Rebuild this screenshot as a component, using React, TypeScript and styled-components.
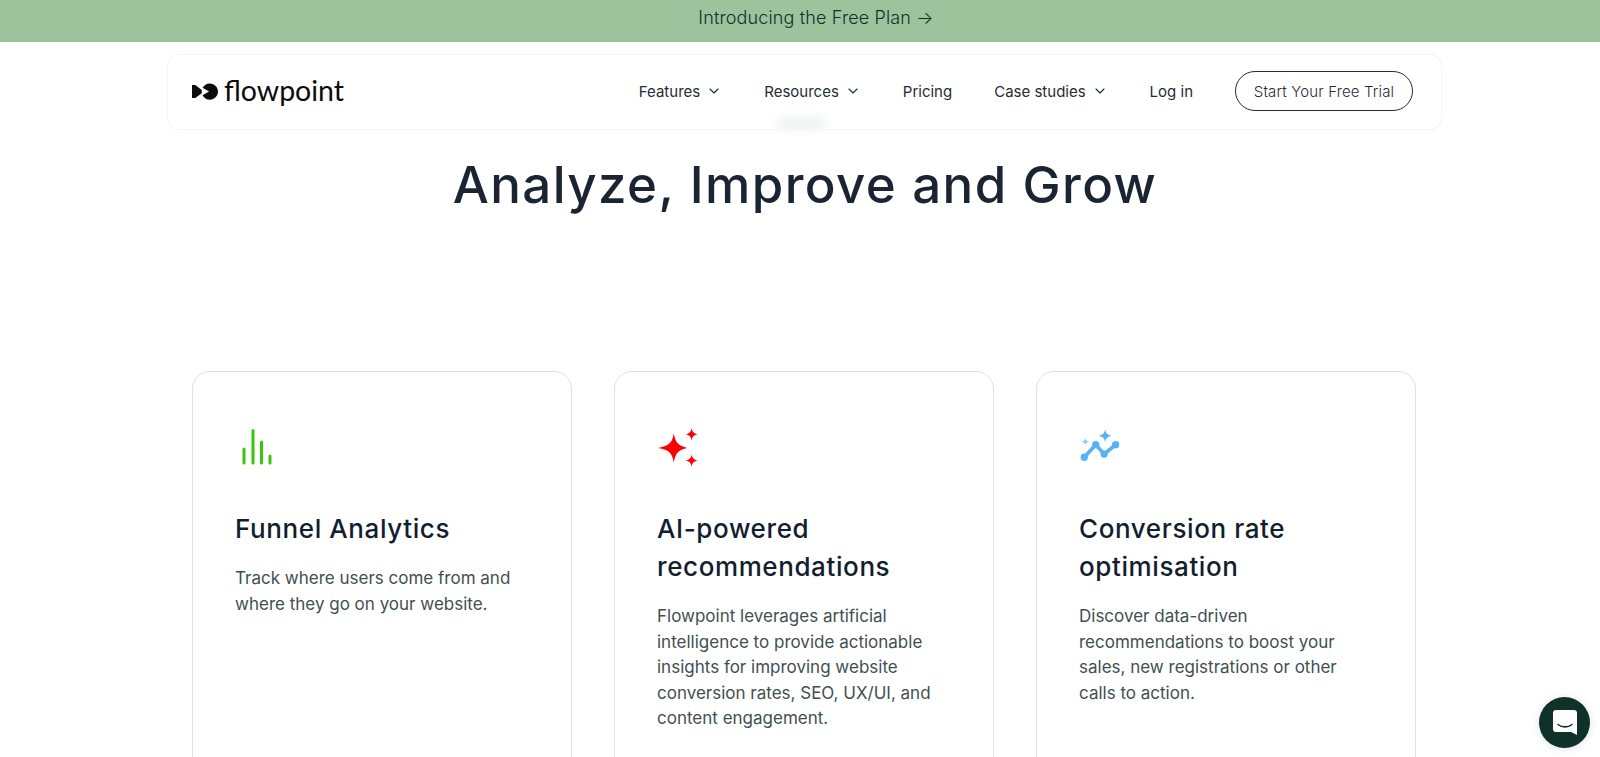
import React from "react";
import styled, { createGlobalStyle } from "styled-components";
import { ChevronDown } from "lucide-react";

const Global = createGlobalStyle`
  html, body { margin: 0; padding: 0; height: 757px; overflow: hidden; background: #fff; }
  * { box-sizing: border-box; }
`;
const Page = styled.div`
  width: 1600px; height: 757px; overflow: hidden; background: #fff; font-family: Inter, sans-serif;
`;
const Banner = styled.a`
  display: flex; align-items: center; justify-content: center; height: 42px; padding: 0 0 7px 32px;
  background: #9dc39c; color: #12302a; font: 300 18px Inter, sans-serif; letter-spacing: 0.14px;
`;
const NavWrap = styled.div`
  padding: 12px 158px 0 167px; position: relative;
`;
const Nav = styled.nav`
  display: flex; align-items: center; justify-content: space-between; height: 76px;
  padding: 0 28px 2px 24px; border: 1px solid #f3f4f4; border-radius: 12px; background: #fff;
`;
const Brand = styled.div`
  display: flex; align-items: center; gap: 6px; color: #0c0c0c;
`;
const BrandName = styled.span`
  font: 400 28.5px Lato, sans-serif; line-height: 1; position: relative; top: -1px;
`;
const Menu = styled.div`
  display: flex; align-items: center; gap: 42px;
`;
const MenuItem = styled.a`
  display: flex; align-items: center; gap: 6px; color: #1f2d33; font: 400 15px Inter, sans-serif; white-space: nowrap;
`;
const Cta = styled.a`
  display: flex; align-items: center; justify-content: center; width: 178px; height: 40px;
  border: 1px solid #1f2f33; border-radius: 20px; color: #1f2d33; font: 300 15px Inter, sans-serif;
  letter-spacing: 0.15px; white-space: nowrap;
`;
const Smudge = styled.div`
  position: absolute; left: 776px; top: 74px; width: 50px; height: 14px; border-radius: 8px;
  background: #f2f3f3; filter: blur(4px);
`;
const Heading = styled.h1`
  margin: 22px 0 0; padding-left: 10px; text-align: center; color: #1a2433;
  font: 450 51px/66px Inter, sans-serif; letter-spacing: 1.4px;
`;
const Cards = styled.div`
  display: grid; grid-template-columns: repeat(3, 379.5px); gap: 42.5px; margin: 153px 0 0 192px;
`;
const Card = styled.article`
  height: 600px; padding: 56px 42px 0; border: 1px solid #dde3e3; border-radius: 18px; background: #fff;
`;
const IconBox = styled.div<{ $inset?: number }>`
  height: 44px; margin-bottom: 38px; padding-left: ${(p) => p.$inset ?? 0}px; display: flex; align-items: flex-start;
`;
const CardTitle = styled.h3`
  margin: 0 0 18px; color: #121e2e; font: 450 26px/38px Inter, sans-serif; letter-spacing: 0.6px;
`;
const CardText = styled.p`
  margin: 0; color: #3f5050; font: 400 17px/25.5px Inter, sans-serif;
`;
const Chat = styled.div`
  position: fixed; left: 1539px; top: 697px; width: 51px; height: 51px; border-radius: 50%;
  background: #10302a; display: flex; align-items: center; justify-content: center;
  box-shadow: 0 1px 8px rgba(0,0,0,.12);
`;

const Logo = () => (
  <svg width="26" height="17" viewBox="0 0 32 20">
    <path d="M0 2h4l8 6v4l-8 6H0z" fill="#0c0c0c" />
    <path d="M22 0c5.500 0 10 4.500 10 10s-4.500 10-10 10c-4 0-7.500-2.300-9-5.500l8-4.500-8-4.500C14.500 2.300 18 0 22 0z" fill="#0c0c0c" />
  </svg>
);
const BarsIcon = () => (
  <svg width="32" height="37" viewBox="0 0 32 37" stroke="#3cc40c" strokeWidth="3" strokeLinecap="round">
    <path d="M2 21v14M11 2.500V35M19.500 14v21M28 28v7" />
  </svg>
);
const SparkIcon = () => (
  <svg width="42" height="40" viewBox="0 0 40 38" fill="#ff0000">
    <path d="M16 5C17.500 14 20 17 29 19C20 21 17.500 24 16 33C14.500 24 12 21 1 19C12 17 14.500 14 16 5Z" />
    <path d="M33 0C33.600 3.800 35 5.200 39 6C35 6.800 33.600 8.200 33 12C32.400 8.200 31 6.800 27 6C31 5.200 32.400 3.800 33 0Z" />
    <path d="M33 25C33.600 28.800 35 30.200 39 31C35 31.800 33.600 33.200 33 37C32.400 33.200 31 31.800 27 31C31 30.200 32.400 28.800 33 25Z" />
  </svg>
);
const TrendIcon = () => (
  <svg width="44" height="35" viewBox="0 0 42 33.500">
    <path d="M5 28L16 16L24 25L35 16" fill="none" stroke="#55b2f7" strokeWidth="3.500" strokeLinecap="round" strokeLinejoin="round" />
    <circle cx="5" cy="28" r="3.500" fill="#55b2f7" /><circle cx="16" cy="16" r="3.500" fill="#55b2f7" />
    <circle cx="24" cy="25" r="3.500" fill="#55b2f7" /><circle cx="35" cy="16" r="3.500" fill="#55b2f7" />
    <path d="M25 1C25.600 5 27 6.500 31 7.500C27 8.500 25.600 10 25 14C24.400 10 23 8.500 19 7.500C23 6.500 24.400 5 25 1Z" fill="#55b2f7" />
    <path d="M6 9C6.300 11.500 7 12.200 10 13C7 13.800 6.300 14.500 6 17C5.700 14.500 5 13.800 2 13C5 12.200 5.700 11.500 6 9Z" fill="#8ccbfa" />
  </svg>
);
const ChatIcon = () => (
  <svg width="24" height="26" viewBox="0 0 24 26">
    <path d="M3 0h18a3 3 0 0 1 3 3v22l-6-3H3a3 3 0 0 1-3-3V3a3 3 0 0 1 3-3z" fill="#fff" />
    <path d="M5 14.500c4 3.200 10 3.200 14 0" fill="none" stroke="#10302a" strokeWidth="1.600" strokeLinecap="round" />
  </svg>
);

const Item = ({ label, caret }: { label: string; caret?: boolean }) => (
  <MenuItem>{label}{caret && <ChevronDown size={16} strokeWidth={1.7} />}</MenuItem>
);

export default function App() {
  return (
    <Page>
      <Global />
      <Banner>Introducing the Free Plan →</Banner>
      <NavWrap>
        <Smudge />
        <Nav>
          <Brand><Logo /><BrandName>flowpoint</BrandName></Brand>
          <Menu>
            <Item label="Features" caret />
            <Item label="Resources" caret />
            <Item label="Pricing" />
            <Item label="Case studies" caret />
            <Item label="Log in" />
            <Cta>Start Your Free Trial</Cta>
          </Menu>
        </Nav>
      </NavWrap>
      <Heading>Analyze, Improve and Grow</Heading>
      <Cards>
        <Card>
          <IconBox $inset={7}><BarsIcon /></IconBox>
          <CardTitle>Funnel Analytics</CardTitle>
          <CardText>Track where users come from and where they go on your website.</CardText>
        </Card>
        <Card>
          <IconBox><SparkIcon /></IconBox>
          <CardTitle>AI-powered recommendations</CardTitle>
          <CardText>Flowpoint leverages artificial intelligence to provide actionable insights for improving website conversion rates, SEO, UX/UI, and content engagement.</CardText>
        </Card>
        <Card>
          <IconBox><TrendIcon /></IconBox>
          <CardTitle>Conversion rate optimisation</CardTitle>
          <CardText>Discover data-driven recommendations to boost your sales, new registrations or other calls to action.</CardText>
        </Card>
      </Cards>
      <Chat><ChatIcon /></Chat>
    </Page>
  );
}
